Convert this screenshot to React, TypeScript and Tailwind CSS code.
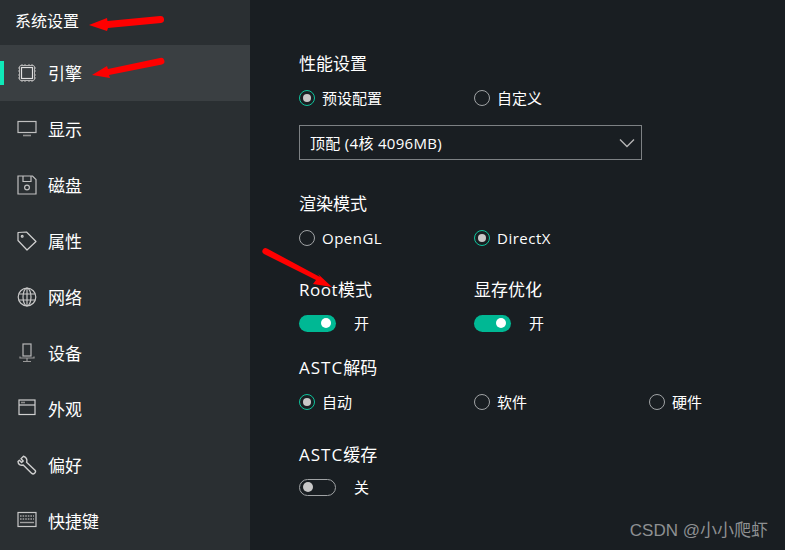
import React from 'react';

const FONT = "font-['Open_Sans','Noto_Sans_CJK_SC',sans-serif]";

const ChipIcon = () => (
  <svg width="20" height="20" viewBox="0 0 20 20" fill="none" stroke="#b4b4b4">
    <rect x="2.5" y="2.5" width="15" height="15" rx="1.5" strokeWidth="1" />
    <rect x="4.5" y="4.5" width="11" height="11" stroke="#e0e0e0" strokeWidth="1.2" />
    <path d="M5 1v1.5M8 1v1.5M12 1v1.5M15 1v1.5M5 17.5V19M8 17.5V19M12 17.5V19M15 17.5V19M1 5h1.5M1 8h1.5M1 12h1.5M1 15h1.5M17.5 5H19M17.5 8H19M17.5 12H19M17.5 15H19" strokeWidth="1" />
  </svg>
);

const MonitorIcon = () => (
  <svg width="20" height="20" viewBox="0 0 20 20" fill="none" stroke="#c0c0c0" strokeWidth="1.2">
    <rect x="1" y="2.5" width="18" height="11" />
    <path d="M6 16.5h8" strokeWidth="1.6" stroke="#8f8f8f" />
  </svg>
);

const SaveIcon = () => (
  <svg width="20" height="20" viewBox="0 0 20 20" fill="none" stroke="#c0c0c0" strokeWidth="1.2">
    <path d="M1 1h14.5L19 4.5V19H1z" />
    <path d="M6 1v5.5h8V1" />
    <circle cx="10" cy="12.5" r="2.4" />
  </svg>
);

const TagIcon = () => (
  <svg width="20" height="20" viewBox="0 0 20 20" fill="none" stroke="#d0d0d0" strokeWidth="1.2" strokeLinejoin="round">
    <path d="M1 1.5L9.5 1L19 10.5L10 19L1 9.5z" />
    <circle cx="5.2" cy="5.2" r="0.9" />
  </svg>
);

const GlobeIcon = () => (
  <svg width="20" height="20" viewBox="0 0 20 20" fill="none" stroke="#c8c8c8" strokeWidth="1.2">
    <circle cx="10" cy="10" r="8.8" />
    <ellipse cx="10" cy="10" rx="4" ry="8.8" />
    <path d="M10 1.2v17.6M1.8 7h16.4M1.8 13h16.4" />
  </svg>
);

const DeviceIcon = () => (
  <svg width="20" height="20" viewBox="0 0 20 20" fill="none" stroke="#b8b8b8" strokeWidth="1.2">
    <rect x="6" y="1" width="8" height="12" />
    <path d="M3 13.5v1.5h14v-1.5" stroke="#999" />
    <path d="M10 15v3M6 18.5h8" stroke="#999" />
  </svg>
);

const WindowIcon = () => (
  <svg width="20" height="20" viewBox="0 0 20 20" fill="none" stroke="#d0d0d0" strokeWidth="1.2">
    <rect x="2" y="1" width="16" height="14.5" />
    <path d="M2 6h16" />
    <path d="M4 3.5h4" stroke="#8a8a8a" strokeWidth="1.6" />
  </svg>
);

const WrenchIcon = () => (
  <svg width="20" height="20" viewBox="0 0 20 20" fill="none" stroke="#d0d0d0" strokeWidth="1.4" strokeLinejoin="round">
    <path d="M6.5 1.2L4 3.7l2.2 2.2-1.6 1.6L2.4 5.3 1 6.6c0 2.6 2.6 4.4 5.2 3.4l8.6 8.4c.8.7 1.8.7 2.6 0l.6-.7c.7-.8.7-1.7 0-2.5L9.6 7.2c.9-2.8-.6-5.4-3.1-6z" />
  </svg>
);

const KeyboardIcon = () => (
  <svg width="20" height="20" viewBox="0 0 20 20" fill="none" stroke="#c8c8c8" strokeWidth="1.2">
    <rect x="1" y="1.5" width="18" height="14" />
    <path d="M3 5h14M3 8h14" stroke="#a0a0a0" strokeWidth="1.4" strokeDasharray="1.6 1" />
    <path d="M3 11.5h14" stroke="#a0a0a0" strokeWidth="1.4" />
  </svg>
);

const MENU = [
  { label: '引擎', icon: <ChipIcon />, active: true },
  { label: '显示', icon: <MonitorIcon /> },
  { label: '磁盘', icon: <SaveIcon /> },
  { label: '属性', icon: <TagIcon /> },
  { label: '网络', icon: <GlobeIcon /> },
  { label: '设备', icon: <DeviceIcon /> },
  { label: '外观', icon: <WindowIcon /> },
  { label: '偏好', icon: <WrenchIcon /> },
  { label: '快捷键', icon: <KeyboardIcon /> },
];

const Radio = ({ label, checked, latin }: { label: string; checked?: boolean; latin?: boolean }) => (
  <div className="flex items-center gap-[7px]">
    <span className={`flex h-4 w-4 items-center justify-center rounded-full border-[1.5px] ${checked ? 'border-[#0fc39c]' : 'border-[#a0a3a5]'}`}>
      {checked && <span className="h-2 w-2 rounded-full bg-[#c8c8c8]" />}
    </span>
    <span className={`text-[15px] leading-6 text-white ${latin ? 'tracking-[0.5px]' : ''}`}>{label}</span>
  </div>
);

const Toggle = ({ on }: { on: boolean }) => (
  <div className="flex items-center">
    {on ? (
      <span className="flex h-[17px] w-[37px] items-center justify-end rounded-full bg-[#00b894] pr-[5px]">
        <span className="h-[10px] w-[10px] rounded-full bg-white" />
      </span>
    ) : (
      <span className="flex h-[17px] w-[37px] items-center rounded-full border-[1.5px] border-[#a0a3a5] pl-[3px]">
        <span className="h-[10px] w-[10px] rounded-full bg-[#c8c8c8]" />
      </span>
    )}
    <span className="ml-[18px] text-[15px] leading-6 text-white">{on ? '开' : '关'}</span>
  </div>
);

const Title = ({ children }: { children: React.ReactNode }) => (
  <div className="h-6 pt-px text-[17px] leading-6 text-white">{children}</div>
);

export default function App() {
  return (
    <div className={`relative flex h-[550px] w-[785px] overflow-hidden bg-[#191e22] ${FONT}`}>
      <aside className="flex w-[250px] shrink-0 flex-col bg-[#2a2f32]">
        <div className="flex h-[45px] items-center pl-[15px] pb-[4px] text-base text-white">系统设置</div>
        {MENU.map((item) => (
          <div
            key={item.label}
            className={`relative flex h-[56px] items-center pl-[17px] ${item.active ? 'bg-[#3a3f42]' : ''}`}
          >
            {item.active && <span className="absolute left-0 top-[16px] h-6 w-1 bg-[#0fe8b8]" />}
            {item.icon}
            <span className="ml-[11px] pt-[2px] text-[17px] text-white">{item.label}</span>
          </div>
        ))}
      </aside>

      <main className="min-w-0 flex-1 pl-[49px] pt-[51px]">
        <Title>性能设置</Title>
        <div className="mt-[11px] grid grid-cols-[175px_175px_175px]">
          <Radio label="预设配置" checked />
          <Radio label="自定义" />
        </div>
        <div className="mt-[15px] flex h-[35px] w-[343px] items-center justify-between border border-[#7d8184] pl-[10px] pr-[6px] text-[15px] text-white">
          <span className="pt-px tracking-[0.3px]">顶配 (4核 4096MB)</span>
          <svg width="16" height="10" viewBox="0 0 16 10" fill="none" stroke="#b4b4b4" strokeWidth="1.4">
            <path d="M1 1.5l7 7 7-7" />
          </svg>
        </div>

        <div className="mt-[31px]"><Title>渲染模式</Title></div>
        <div className="mt-[11px] grid grid-cols-[175px_175px_175px]">
          <Radio label="OpenGL" latin />
          <Radio label="DirectX" checked latin />
        </div>

        <div className="mt-[27px] grid grid-cols-[175px_175px_175px]">
          <Title><span className="tracking-[0.5px]">Root</span>模式</Title>
          <Title>显存优化</Title>
        </div>
        <div className="mt-[10px] grid grid-cols-[175px_175px_175px]">
          <Toggle on />
          <Toggle on />
        </div>

        <div className="mt-[20px]"><Title><span className="tracking-[1px]">ASTC</span>解码</Title></div>
        <div className="mt-[11px] grid grid-cols-[175px_175px_175px]">
          <Radio label="自动" checked />
          <Radio label="软件" />
          <Radio label="硬件" />
        </div>

        <div className="mt-[28px]"><Title><span className="tracking-[1px]">ASTC</span>缓存</Title></div>
        <div className="mt-[9px]"><Toggle on={false} /></div>
      </main>

      <div className="absolute bottom-[9px] right-[17px] font-['Liberation_Sans','Noto_Sans_CJK_SC',sans-serif] text-[17px] leading-5 text-[#8e9092]">CSDN @小小爬虾</div>

      {/* red annotation arrows on top of the screenshot */}
      <svg className="pointer-events-none absolute left-0 top-0" width="785" height="550" fill="#f00">
        <path d="M89 25L107 18L107.5 21L160 16A3.2 3.2 0 0 1 161 23L108 28L107 31z" />
        <path d="M92 75L107 66L108 69L160 58A3 3 0 0 1 162 64.5L109 75L110 78z" />
        <path d="M332 287L313 284L316 280L264 254A3 3 0 0 1 267 248.5L320 277L318 274z" />
      </svg>
    </div>
  );
}
